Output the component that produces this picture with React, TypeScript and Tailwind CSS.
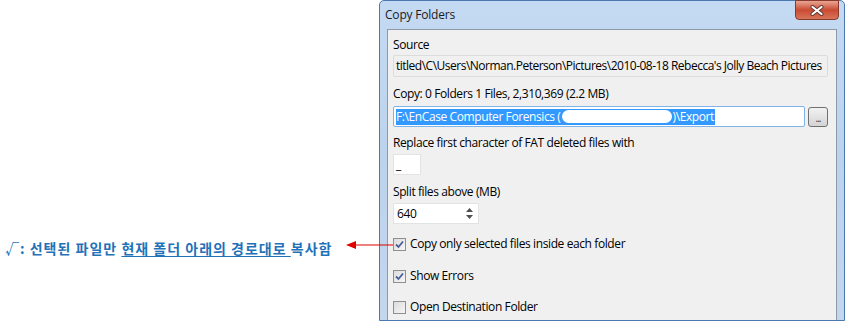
import React from 'react';

const Check: React.FC<{ checked?: boolean }> = ({ checked }) => (
  <span className="w-[13px] h-[13px] border border-[#8e8f8f] bg-gradient-to-br from-[#dcdcdc] to-[#f6f6f6] flex items-center justify-center shrink-0">
    {checked && (
      <svg width="9" height="9" viewBox="0 0 9 9">
        <path d="M1 4.5 L3.5 7 L8 1.5" fill="none" stroke="#4a5f97" strokeWidth="1.8" />
      </svg>
    )}
  </span>
);

const Label: React.FC<{ children: React.ReactNode; className?: string }> = ({ children, className }) => (
  <div className={`h-[16px] leading-[16px] whitespace-nowrap ${className ?? ''}`}>{children}</div>
);

export default function App() {
  return (
    <div className="w-[845px] h-[325px] bg-white flex overflow-hidden" style={{ fontFamily: '"Open Sans", "Noto Sans", sans-serif' }}>
      {/* annotation */}
      <div className="relative z-10 w-[379px] shrink-0 pt-[236px]">
        <span
          className="pl-[5px] text-[14px] font-bold text-[#1f72b8] leading-[18px] tracking-[1px] whitespace-nowrap"
          style={{ fontFamily: '"Noto Sans CJK KR", "Noto Sans", sans-serif' }}
        >
          √: 선택된 파일만 <span className="underline underline-offset-2">현재 폴더 아래의 경로대로 </span>복사함
        </span>
        <svg width="47" height="10" viewBox="0 0 47 10" className="absolute left-[346px] top-[240px] overflow-visible">
          <path d="M0 5 L10 1 L10 9 Z" fill="#e00000" />
          <path d="M9 5 H47" stroke="#e00000" strokeWidth="1.2" />
        </svg>
      </div>

      {/* dialog */}
      <div className="relative w-[466px] h-[321px] shrink-0 border border-[#4a78b0] rounded-t-[5px] bg-gradient-to-b from-[#c4daf2] via-[#bcd3ec] to-[#c3d7ee] flex flex-col text-[12px] tracking-[-0.4px] text-black">
        <div className="h-[28px] flex items-center pl-[5px]">
          <span className="text-[12px] text-[#1b1b1b] tracking-[-0.2px]">Copy Folders</span>
        </div>
        <div className="absolute right-[5px] top-[-1px] w-[44px] h-[20px] rounded-b-[4px] border border-[#8a3a2c] bg-gradient-to-b from-[#e9a593] via-[#c94a32] to-[#d8745a] flex items-center justify-center">
          <svg width="16" height="11" viewBox="0 0 16 11">
            <path d="M3.5 2 L12.5 9 M12.5 2 L3.5 9" stroke="#5a3530" strokeWidth="4" strokeLinecap="round" />
            <path d="M3.5 2 L12.5 9 M12.5 2 L3.5 9" stroke="#ffffff" strokeWidth="2.2" strokeLinecap="round" />
          </svg>
        </div>

        <div className="mx-[7px] flex-1 border border-[#8e9aaa] border-b-0 bg-[#f0f0f0] pl-[5px] pr-[8px] flex flex-col">
          <Label className="mt-[7px]">Source</Label>
          <div className="mt-[2px] h-[22px] border border-[#dcdcdc] rounded-[2px] flex items-center pl-[2px] whitespace-nowrap overflow-hidden tracking-[-0.5px]">
            titled\C\Users\Norman.Peterson\Pictures\2010-08-18 Rebecca's Jolly Beach Pictures
          </div>

          <Label className="mt-[9px]">Copy: 0 Folders 1 Files, 2,310,369 (2.2 MB)</Label>
          <div className="mt-[4px] flex items-center gap-[3px]">
            <div className="flex-1 h-[21px] bg-white border border-[#7eb4ea] rounded-[2px] flex items-center pl-[2px]">
              <span className="bg-[#3399ff] text-white h-[16px] leading-[16px] flex items-center whitespace-nowrap pr-[1px]">
                F:\EnCase Computer Forensics (
                <span className="inline-block w-[110px] h-[13px] bg-white rounded-full mx-[1px]" />
                )\Export
              </span>
            </div>
            <div className="w-[20px] h-[20px] rounded-[3px] border border-[#707070] bg-gradient-to-b from-[#f2f2f2] to-[#d4d4d4] flex items-end justify-center pb-[5px]">
              <span className="text-[#333] text-[10px] leading-[6px] tracking-[-1px]">...</span>
            </div>
          </div>

          <Label className="mt-[8px]">Replace first character of FAT deleted files with</Label>
          <div className="mt-[3px] w-[28px] h-[21px] bg-white border border-[#e2e3e5] flex items-center pl-[2px]">_</div>

          <Label className="mt-[9px]">Split files above (MB)</Label>
          <div className="mt-[3px] w-[86px] h-[21px] bg-white border border-[#e2e3e5] flex items-center">
            <span className="flex-1 pl-[3px]">640</span>
            <div className="w-[16px] h-full flex flex-col items-center justify-center gap-[3px] pr-[1px]">
              <svg width="7" height="4" viewBox="0 0 7 4"><path d="M0 4 L3.5 0 L7 4 Z" fill="#505050" /></svg>
              <svg width="7" height="4" viewBox="0 0 7 4"><path d="M0 0 L3.5 4 L7 0 Z" fill="#505050" /></svg>
            </div>
          </div>

          <div className="mt-[12px] h-[16px] flex items-center gap-[4px]">
            <Check checked />
            <span>Copy only selected files inside each folder</span>
          </div>
          <div className="mt-[16px] h-[16px] flex items-center gap-[4px]">
            <Check checked />
            <span>Show Errors</span>
          </div>
          <div className="mt-[15px] h-[16px] flex items-center gap-[4px]">
            <Check />
            <span>Open Destination Folder</span>
          </div>
        </div>
      </div>
    </div>
  );
}
